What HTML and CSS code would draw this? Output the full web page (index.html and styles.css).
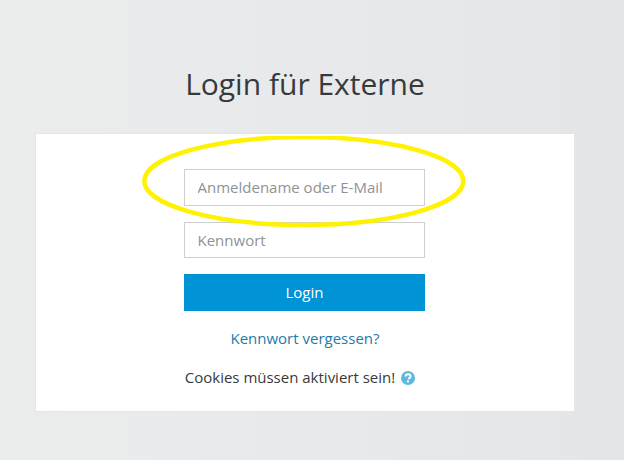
FILE: index.html
```html
<!DOCTYPE html>
<html>
<head>
  <title>Login für Externe</title>
  <link rel="stylesheet" href="styles.css">
</head>
<body>
  <div class="page">
    <h1 class="title">Login für Externe</h1>
    <div class="card">
      <form class="login-form">
        <input class="field" type="text" placeholder="Anmeldename oder E-Mail">
        <input class="field" type="password" placeholder="Kennwort">
        <button class="login-btn" type="button">Login</button>
      </form>
      <a class="forgot" href="#">Kennwort vergessen?</a>
      <div class="cookies">
        <span>Cookies müssen aktiviert sein!</span>
        <svg class="help" viewBox="0 0 14 14" width="14" height="14">
          <circle cx="7" cy="7" r="7" fill="#5bb8de"/>
          <path d="M4.5 5.5C4.6 4 5.7 3.2 7.1 3.2c1.4 0 2.5.8 2.5 2.1 0 1-.6 1.4-1.2 1.8-.5.3-.7.6-.7 1.2" fill="none" stroke="#fff" stroke-width="2"/>
          <rect x="5.9" y="9.4" width="2" height="2" fill="#fff"/>
        </svg>
      </div>
    </div>
  </div>
  <svg class="marker" width="330" height="100" viewBox="0 0 330 100">
    <ellipse cx="163.8" cy="45" rx="159.5" ry="44" fill="none" stroke="#fff200" stroke-width="4.5"/>
  </svg>
</body>
</html>
```

FILE: styles.css
```css
body {
  font-family: "Open Sans", sans-serif;
  margin: 0;
  padding: 0;
  height: 460px;
  overflow: hidden;
  background: linear-gradient(90deg, #ebecec 0%, #e8e9eb 50%, #e4e5e7 100%);
  color: #373a3c;
}
.page {
  width: 540px;
  margin-left: 35px;
}
.title {
  margin: 0;
  padding-top: 64px;
  height: 133px;
  box-sizing: border-box;
  font-size: 30px;
  font-weight: 400;
  line-height: 40px;
  text-align: center;
}
.card {
  display: flex;
  flex-direction: column;
  align-items: center;
  box-sizing: border-box;
  height: 279px;
  padding-top: 35px;
  background: #fff;
  border: 1px solid #e5e5e5;
}
.login-form {
  display: flex;
  flex-direction: column;
  width: 241px;
  margin-right: 1px;
}
.field {
  box-sizing: border-box;
  width: 100%;
  height: 36.5px;
  margin: 0 0 16px;
  padding: 0 12.5px;
  border: 1px solid #cfcfcf;
  border-radius: 0;
  font-family: inherit;
  font-size: 15px;
  outline: none;
}
.field::placeholder {
  color: #8f9296;
  opacity: 1;
}
.login-btn {
  height: 37px;
  padding: 0 0 2px;
  border: 0;
  background: #0093d6;
  color: #fff;
  font-family: inherit;
  font-size: 15px;
  cursor: pointer;
}
.forgot {
  margin-top: 17px;
  line-height: 20px;
  font-size: 15px;
  color: #1d7ba5;
  text-decoration: none;
}
.cookies {
  display: flex;
  align-items: center;
  gap: 6px;
  margin-top: 19px;
  margin-right: 10px;
  line-height: 20px;
  font-size: 15px;
}
.help {
  margin-top: 2px;
}
.marker {
  position: absolute;
  left: 140px;
  top: 136px;
}
```
